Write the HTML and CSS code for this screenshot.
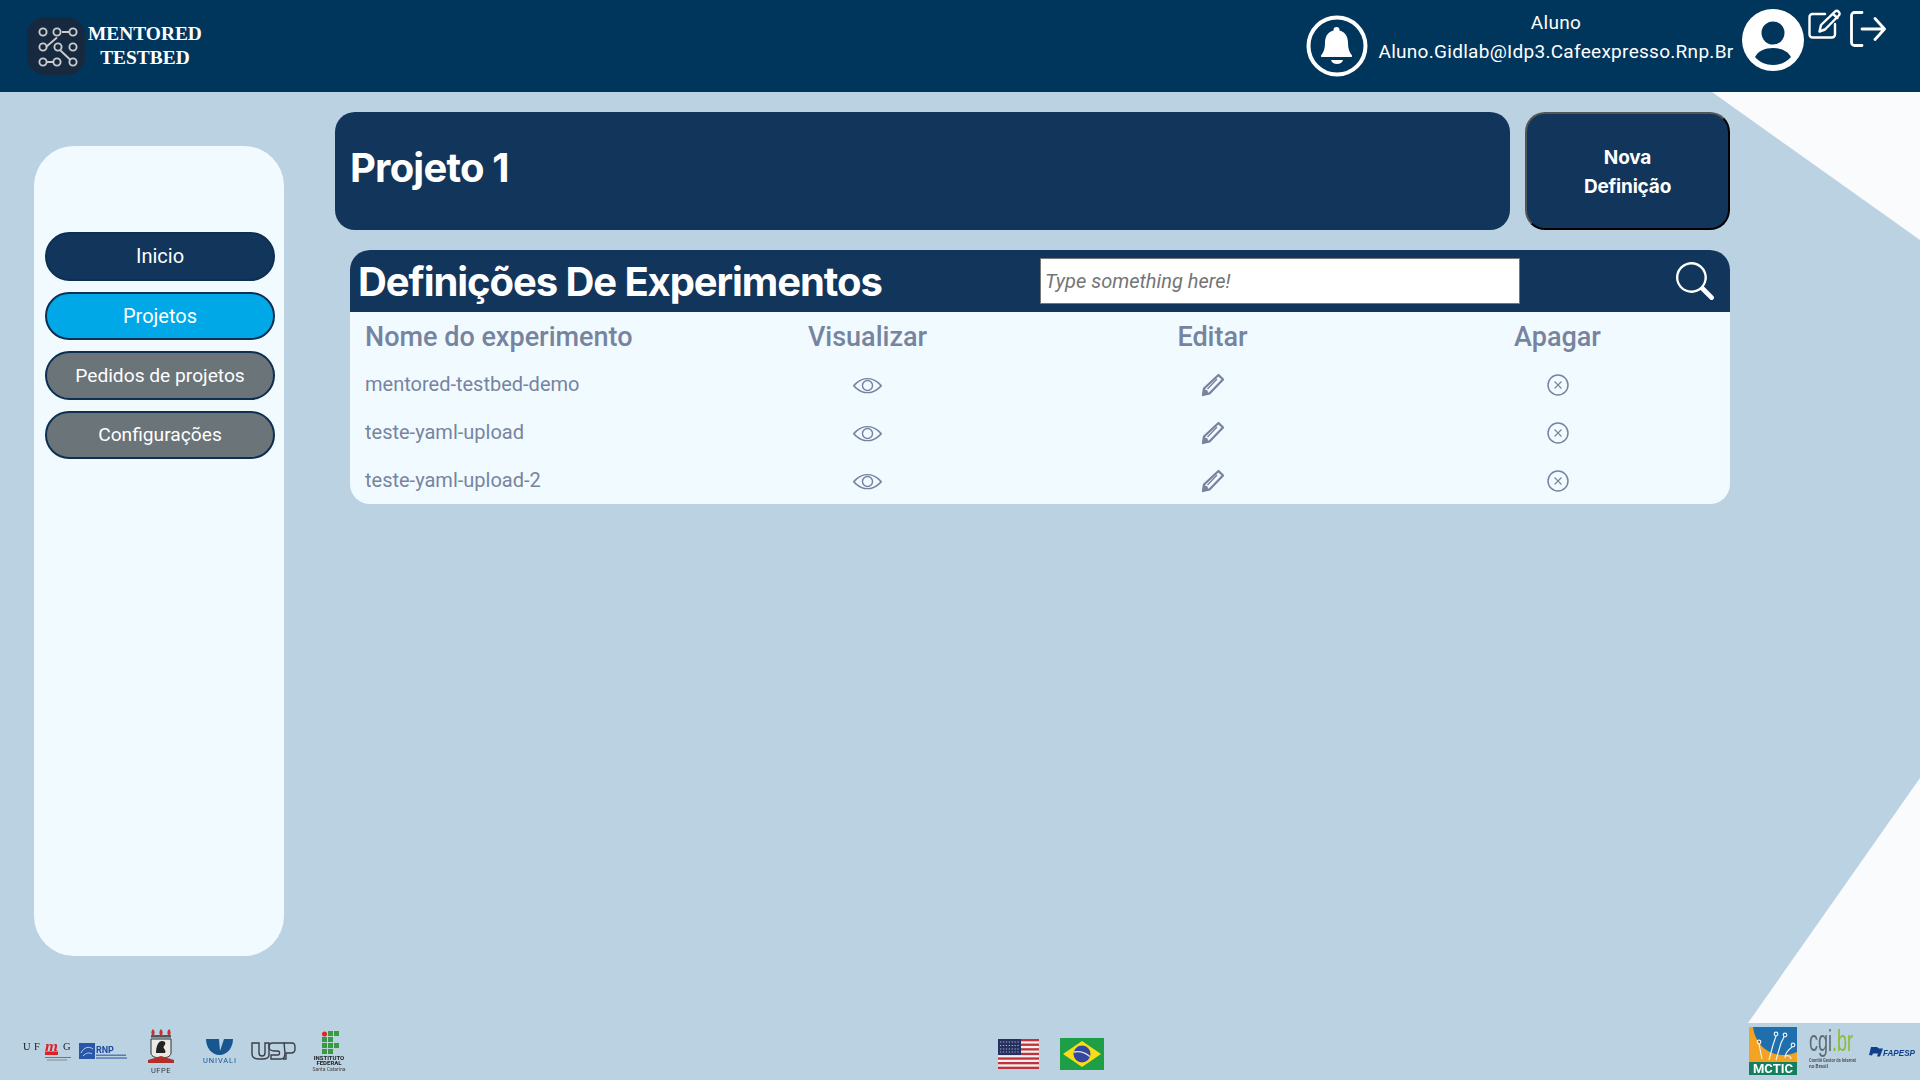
FILE: index.html
```html
<!DOCTYPE html>
<html lang="pt-BR">
<head>
<meta charset="utf-8">
<title>Mentored Testbed</title>
<link rel="stylesheet" href="styles.css">
</head>
<body>
<div class="tri tri-top"></div>
<div class="tri tri-bottom"></div>
<header class="topbar">
  <div class="brand">
    <svg class="brand-icon" viewBox="0 0 58 58">
      <rect width="58" height="58" rx="18" fill="#16293f"/>
      <g fill="none" stroke="#c9cbcc" stroke-width="1.9">
        <path d="M19 30 30 20.500M35 15h7M33.500 33.500 43.500 43M20 45h6"/>
        <circle cx="16" cy="15" r="3.600"/><circle cx="30" cy="15" r="3.600"/><circle cx="46" cy="15" r="3.600"/>
        <circle cx="16" cy="30" r="3.600"/><circle cx="31" cy="30" r="3.600"/><circle cx="46" cy="30" r="3.600"/>
        <circle cx="16" cy="45" r="3.600"/><circle cx="30" cy="45" r="3.600"/><circle cx="46" cy="45" r="3.600"/>
      </g>
    </svg>
    <div class="brand-name">MENTORED<br>TESTBED</div>
  </div>
  <div class="user">
    <svg class="bell" viewBox="0 0 62 62">
      <circle cx="31" cy="31" r="28.500" fill="none" stroke="#fff" stroke-width="4"/>
      <path fill="#fff" d="M30.500 12c2 0 3 1.200 3 3v.5C39.500 17 42 22 42 28c0 5 1 9 4 12.500q.6 1.500-1 1.500H16q-1.600 0-1-1.500C18 37 19 33 19 28c0-6 2.500-11 8.500-12.500V15c0-1.800 1-3 3-3z"/>
      <path fill="#fff" d="M25 45h12c-.6 2.600-3 4-6 4s-5.400-1.400-6-4z"/>
    </svg>
    <div class="user-text">
      <div>Aluno</div>
      <div>Aluno.Gidlab@Idp3.Cafeexpresso.Rnp.Br</div>
    </div>
    <svg class="avatar" viewBox="0 0 62 62">
      <circle cx="31" cy="31" r="31" fill="#fff"/>
      <circle cx="31" cy="24" r="11.500" fill="#00365c"/>
      <path fill="#00365c" d="M13 48c3-6 10-9 18-9s15 3 18 9c-4 5-11 8-18 8s-14-3-18-8z"/>
    </svg>
    <svg class="edit" viewBox="0 0 34 30" fill="none" stroke="#fff" stroke-width="2.400" stroke-linecap="round" stroke-linejoin="round">
      <path d="M17 5H4.500A3 3 0 0 0 1.500 8v17.500a3 3 0 0 0 3 3H24a3 3 0 0 0 3-3V15"/>
      <path d="M13 16 27 2.700c1.200-1.100 2.600-1 3.700.1s1.200 2.600.1 3.700L17 20.500l-5.500 2z"/>
      <path d="M25 5l4.500 4"/>
    </svg>
    <svg class="logout" viewBox="0 0 36 36" fill="none" stroke="#fff" stroke-width="2.800" stroke-linecap="round" stroke-linejoin="round">
      <path d="M12 1.500H4.500A3 3 0 0 0 1.500 4.500v27a3 3 0 0 0 3 3H12"/>
      <path d="M12 18h22M25 7.500 34.500 18 25 28.500"/>
    </svg>
  </div>
</header>

<main class="main">
  <nav class="sidebar">
    <a class="pill pill-dark">Inicio</a>
    <a class="pill pill-active">Projetos</a>
    <a class="pill pill-gray">Pedidos de projetos</a>
    <a class="pill pill-gray">Configurações</a>
  </nav>
  <section class="content">
    <div class="top-row">
      <div class="title-card"><h1>Projeto 1</h1></div>
      <button class="new-btn" type="button">Nova<br>Definição</button>
    </div>
    <div class="table">
      <div class="table-head">
        <h2>Definições De Experimentos</h2>
        <input class="search-input" type="text" placeholder="Type something here!">
        <svg class="search-icon" viewBox="0 0 16 16" fill="#fff"><path d="M11.742 10.344a6.500 6.500 0 1 0-1.397 1.398h-.001q.044.060.098.115l3.850 3.850a1 1 0 0 0 1.415-1.414l-3.850-3.850a1 1 0 0 0-.115-.100zM12 6.500a5.500 5.500 0 1 1-11 0 5.500 5.500 0 0 1 11 0"/></svg>
      </div>
      <div class="row row-head">
        <div class="cell-name">Nome do experimento</div><div>Visualizar</div><div>Editar</div><div>Apagar</div>
      </div>
      <div class="row">
        <div class="cell-name">mentored-testbed-demo</div>
        <div><svg class="ic-eye" viewBox="0 0 29 20"><use href="#eye"/></svg></div>
        <div><svg class="ic-pen" viewBox="0 0 24 24"><use href="#pen"/></svg></div>
        <div><svg class="ic-x" viewBox="0 0 22 22"><use href="#xc"/></svg></div>
      </div>
      <div class="row">
        <div class="cell-name">teste-yaml-upload</div>
        <div><svg class="ic-eye" viewBox="0 0 29 20"><use href="#eye"/></svg></div>
        <div><svg class="ic-pen" viewBox="0 0 24 24"><use href="#pen"/></svg></div>
        <div><svg class="ic-x" viewBox="0 0 22 22"><use href="#xc"/></svg></div>
      </div>
      <div class="row">
        <div class="cell-name">teste-yaml-upload-2</div>
        <div><svg class="ic-eye" viewBox="0 0 29 20"><use href="#eye"/></svg></div>
        <div><svg class="ic-pen" viewBox="0 0 24 24"><use href="#pen"/></svg></div>
        <div><svg class="ic-x" viewBox="0 0 22 22"><use href="#xc"/></svg></div>
      </div>
    </div>
  </section>
</main>

<footer class="footer">
  <div class="logos logos-left">
    <svg class="lg-ufmg" viewBox="0 0 48 20">
      <text x="0" y="9" class="t-serif" font-size="10.500" fill="#222">U</text>
      <text x="11" y="9" class="t-serif" font-size="10.500" fill="#222">F</text>
      <text x="22" y="9.500" class="t-serif-i" font-size="15" textLength="13" lengthAdjust="spacingAndGlyphs" fill="#d8232a">m</text>
      <text x="40" y="9" class="t-serif" font-size="10.500" fill="#222">G</text>
      <rect x="22" y="10.500" width="13" height="3.500" fill="#d8232a"/>
      <rect x="22" y="16" width="26" height="1" fill="#777"/>
      <rect x="24" y="18.500" width="20" height="1" fill="#888"/>
    </svg>
    <svg class="lg-rnp" viewBox="0 0 48 16">
      <rect width="16" height="16" fill="#2a56a8"/>
      <path d="M2 10c3-6 8-7 12-4M4 13c3-3 6-4 9-2" stroke="#bcd0ee" fill="none"/>
      <text x="17" y="10" class="t-sans" font-size="9" font-weight="700" fill="#1e4a9a">RNP</text>
      <rect x="17" y="11.500" width="30" height="1.500" fill="#5b78b4"/>
      <rect x="17" y="14.300" width="31" height="1.500" fill="#5b78b4"/>
    </svg>
    <svg class="lg-ufpe" viewBox="0 0 26 44">
      <path d="M5 0c2 2 2 4 1 6H4C3 4 3 2 5 0zM13 0c2 2 2 4 1 6h-2c-1-2-1-4 1-6zM21 0c2 2 2 4 1 6h-2c-1-2-1-4 1-6z" fill="#c6322e"/>
      <rect x="3" y="6" width="20" height="2.500" fill="#555"/>
      <path d="M3 10h20v14c0 4-6 5-10 5S3 28 3 24z" fill="#e9e9e6" stroke="#333"/>
      <path d="M8 24c0-6 2-12 6-12s4 3 2 5 3 4 1 7z" fill="#222"/>
      <path d="M0 31 13 27l13 4v3H0z" fill="#b22f2c"/>
      <text x="13" y="43.500" text-anchor="middle" class="t-sans" font-size="7.500" letter-spacing=".5" fill="#333">UFPE</text>
    </svg>
    <svg class="lg-univali" viewBox="0 0 33 24">
      <path d="M3 0h13l1 12 4-12h9c0 9-6 16-13.500 16S3 9 3 0z" fill="#17568f"/>
      <text x="0" y="23.500" class="t-sans" font-size="7.500" textLength="33" lengthAdjust="spacing" fill="#17568f">UNIVALI</text>
    </svg>
    <svg class="lg-usp" viewBox="0 0 45 18" fill="none" stroke="#3a3f45" stroke-width="1.400">
      <path d="M1 1h7v10c0 2 1 3 3 3s3-1 3-3V1h4v12c0 3-3 4-7 4H8c-5 0-7-2-7-5z"/>
      <path d="M33 1H22c-3 0-4 2-4 4s2 4 5 4h4c2 0 2 4 0 4h-7v4h10c3 0 4-3 4-6z"/>
      <path d="M33 1h8c2 0 3 2 3 4v2c0 2-1 4-4 4h-5v6h-3"/>
    </svg>
    <svg class="lg-if" viewBox="0 0 36 40">
      <circle cx="13.500" cy="3" r="2.500" fill="#e02420"/>
      <g fill="#3a9a3f">
        <rect x="17" y="0" width="5" height="5"/><rect x="23" y="0" width="5" height="5"/>
        <rect x="11" y="6" width="5" height="5"/><rect x="17" y="6" width="5" height="5"/>
        <rect x="11" y="12" width="5" height="5"/><rect x="17" y="12" width="5" height="5"/><rect x="23" y="12" width="5" height="5"/>
        <rect x="11" y="18" width="5" height="5"/><rect x="17" y="18" width="5" height="5"/>
      </g>
      <text x="18" y="29" text-anchor="middle" class="t-sans" font-size="6" font-weight="700" fill="#222">INSTITUTO</text>
      <text x="18" y="34" text-anchor="middle" class="t-sans" font-size="6" font-weight="700" fill="#222">FEDERAL</text>
      <text x="18" y="39.500" text-anchor="middle" class="t-sans" font-size="5" fill="#444">Santa Catarina</text>
    </svg>
  </div>
  <div class="logos logos-center">
    <svg class="flag-us" viewBox="0 0 41 30">
      <rect width="41" height="30" fill="#f1efef"/>
      <g fill="#c0313c">
        <rect y="0" width="41" height="2.300"/><rect y="4.600" width="41" height="2.300"/><rect y="9.200" width="41" height="2.300"/><rect y="13.800" width="41" height="2.300"/><rect y="18.400" width="41" height="2.300"/><rect y="23" width="41" height="2.300"/><rect y="27.700" width="41" height="2.300"/>
      </g>
      <rect width="23" height="16" fill="#26305f"/>
      <path d="M2 3h19M2 6.500h19M2 10h19M2 13h19" stroke="#aab2cc" stroke-width="1.100" stroke-dasharray="1.300 1.600"/>
    </svg>
    <svg class="flag-br" viewBox="0 0 44 32">
      <rect width="44" height="32" fill="#1f9e48"/>
      <path d="M22 3 41 16 22 29 3 16z" fill="#f9dd16"/>
      <circle cx="22" cy="16" r="8.500" fill="#3446a0"/>
      <path d="M13.800 14c5-1 11.500.5 16 4.500" fill="none" stroke="#d9e6da" stroke-width="1.300"/>
    </svg>
  </div>
  <div class="logos logos-right">
    <svg class="lg-mctic" viewBox="0 0 48 48">
      <rect width="48" height="48" fill="#f3a221"/>
      <path d="M4 0h44v25c-4 2-9 3-14 3C18 28 6 16 4 0z" fill="#1f6fae"/>
      <g stroke="#e8f1f7" stroke-width="1.200" fill="none">
        <path d="M13 32 10 17M20 33l4-15 3-9M27 33l5-17 3-6M36 31c0-5 3-8 7-11M42 32c0-2-2-4-5-3"/>
        <circle cx="10" cy="15" r="1.800"/><circle cx="27" cy="7" r="1.800"/><circle cx="36" cy="8" r="1.800"/><circle cx="44" cy="18" r="1.800"/>
      </g>
      <rect y="35" width="48" height="13" fill="#12805f"/>
      <text x="4" y="46" class="t-sans" font-size="12" font-weight="700" textLength="40" lengthAdjust="spacingAndGlyphs" fill="#fff">MCTIC</text>
    </svg>
    <svg class="lg-cgi" viewBox="0 0 49 44">
      <text x="1" y="22" class="t-sans-c" font-size="29" textLength="44" lengthAdjust="spacingAndGlyphs" fill="#5f6b73">cgi<tspan fill="#8dbb35">.br</tspan></text>
      <text x="1" y="33" class="t-sans" font-size="4.800" font-weight="700" textLength="47" lengthAdjust="spacingAndGlyphs" fill="#555">Comitê Gestor da Internet</text>
      <text x="1" y="39" class="t-sans" font-size="4.800" font-weight="700" fill="#555">no Brasil</text>
    </svg>
    <svg class="lg-fapesp" viewBox="0 0 47 11">
      <path d="M0 9 2 1h6l2 1.500h4l-3 8H8l1-3H4l-1 2z" fill="#10408c"/>
      <text x="14" y="9.500" class="t-sans-bi" font-size="9.500" textLength="32" lengthAdjust="spacingAndGlyphs" fill="#10408c">FAPESP</text>
    </svg>
  </div>
</footer>

<svg class="defs" width="0" height="0">
  <defs>
    <g id="eye" fill="#76849f">
      <path transform="translate(.5 -.6) scale(1.750 1.340)" d="M16 8s-3-5.500-8-5.500S0 8 0 8s3 5.500 8 5.500S16 8 16 8M1.173 8a13 13 0 0 1 1.660-2.043C4.120 4.668 5.880 3.500 8 3.500s3.879 1.168 5.168 2.457A13 13 0 0 1 14.828 8q-.086.130-.195.288c-.335.480-.830 1.120-1.465 1.755C11.879 11.332 10.119 12.500 8 12.500s-3.879-1.168-5.168-2.457A13 13 0 0 1 1.172 8z"/>
      <path fill-rule="evenodd" d="M14.500 4.500a5.500 5.500 0 1 0 0 11 5.500 5.500 0 0 0 0-11m0 1.400a4.100 4.100 0 1 1 0 8.200 4.100 4.100 0 0 1 0-8.200"/>
    </g>
    <g id="pen" fill="none" stroke="#76849f" stroke-linejoin="round">
      <path stroke-width="2.300" d="M17.500 2 22 6.500 8.500 20.500 2 22l1-6.500z"/>
      <path fill="#76849f" stroke-width="1" d="M3 16l-1 6 6.500-1.500-2-.5-.5-2.500-2.500-.5z"/>
      <path stroke-width="1.300" d="M16 6 6.500 16"/>
    </g>
    <g id="xc" fill="none" stroke="#76849f">
      <circle cx="11" cy="11" r="10" stroke-width="1.500"/>
      <path d="M7.500 7.500l7 7M14.500 7.500l-7 7" stroke-width="1.100"/>
    </g>
  </defs>
</svg>
</body>
</html>
```

FILE: styles.css
```css
* { box-sizing: border-box; }
html, body { margin: 0; height: 100%; }
body {
  width: 1920px;
  height: 1080px;
  overflow: hidden;
  position: relative;
  background: #bbd2e3;
  font-family: Roboto, "Liberation Sans", sans-serif;
  display: flex;
  flex-direction: column;
}
.defs { position: absolute; }

.tri { position: absolute; background: #f9fbfd; }
.tri-top {
  top: 92px; right: 0; width: 208px; height: 148px;
  clip-path: polygon(0 0, 100% 0, 100% 100%);
}
.tri-bottom {
  top: 778px; right: 0; width: 172px; height: 245px;
  clip-path: polygon(100% 0, 100% 100%, 0 100%);
}

/* top bar */
.topbar {
  position: relative;
  height: 92px;
  flex: none;
  background: #00365c;
  color: #fff;
  display: flex;
  justify-content: space-between;
  padding: 0 34px 0 27px;
}
.brand { display: flex; align-items: flex-start; padding-top: 17px; }
.brand-icon { width: 58px; height: 58px; }
.brand-name {
  font-family: "Liberation Serif", serif;
  font-weight: 700;
  font-size: 19.400px;
  line-height: 24px;
  text-align: center;
  margin: 5px 0 0 3px;
}
.user { display: flex; align-items: flex-start; }
.bell { width: 62px; height: 62px; margin-top: 15px; }
.user-text {
  width: 356px;
  margin: 8px 0 0 10px;
  text-align: center;
  font-size: 19px;
  line-height: 29px;
  letter-spacing: .29px;
  white-space: nowrap;
}
.avatar { width: 62px; height: 62px; margin: 9px 0 0 8px; }
.edit { width: 34px; height: 30px; margin: 9px 0 0 4px; }
.logout { width: 36px; height: 36px; margin: 11px 0 0 8px; }

/* main */
.main {
  position: relative;
  flex: 1;
  display: flex;
  align-items: flex-start;
  padding-left: 34px;
}
.sidebar {
  width: 250px;
  height: 810px;
  margin-top: 54px;
  padding: 86px 9px 0 11px;
  background: #f1faff;
  border-radius: 40px;
  display: flex;
  flex-direction: column;
  gap: 11px;
}
.pill {
  height: 48.500px;
  display: flex;
  align-items: center;
  justify-content: center;
  color: #fff;
  font-size: 20px;
  border: 2px solid #0c2f52;
  border-radius: 25px;
}
.pill-dark { background: #12355b; }
.pill-active { background: #00a8e8; }
.pill-gray { background: #6a7479; font-size: 19.200px; }

.content {
  width: 1395px;
  margin-left: 51px;
  padding-top: 20px;
}
.top-row { display: flex; gap: 15px; }
.title-card {
  flex: 1;
  height: 118px;
  background: #12355b;
  border-radius: 20px;
  padding: 0 15px;
  display: flex;
  align-items: center;
}
h1 {
  margin: 0 0 8px;
  color: #fff;
  font-family: Inter, sans-serif;
  font-size: 40px;
  font-weight: 700;
  letter-spacing: -.02em;
}
.new-btn {
  width: 205px;
  height: 118px;
  padding: 2px 0 0;
  background: #12355b;
  color: #fff;
  border: 2px solid;
  border-color: #555 #000 #000 #555;
  border-radius: 20px;
  font-family: Inter, sans-serif;
  font-size: 19px;
  font-weight: 700;
  line-height: 29px;
  letter-spacing: -.01em;
}
.table {
  width: 1380px;
  height: 254px;
  margin: 20px 0 0 15px;
  background: #f1faff;
  border-radius: 20px;
  overflow: hidden;
}
.table-head {
  height: 62px;
  background: #12355b;
  display: flex;
  align-items: center;
  padding-left: 8px;
  position: relative;
}
h2 {
  margin: 0;
  width: 682px;
  color: #fff;
  font-family: Inter, sans-serif;
  font-size: 40px;
  font-weight: 700;
  letter-spacing: -.027em;
  white-space: nowrap;
}
.search-input {
  width: 480px;
  height: 46px;
  padding: 0 4px;
  background: #fff;
  border: 1px solid #767676;
  font-family: Roboto, sans-serif;
  font-size: 20px;
}
.search-input::placeholder { color: #757575; font-style: italic; opacity: 1; }
.search-icon { width: 38px; height: 38px; margin-left: 156px; }

.row {
  height: 48px;
  display: grid;
  grid-template-columns: repeat(4, 1fr);
  align-items: center;
  text-align: center;
  color: #76849f;
  font-size: 20px;
}
.row > div { display: flex; align-items: center; justify-content: center; }
.row > .cell-name { justify-content: flex-start; padding-left: 15px; }
.row-head { font-size: 27px; font-weight: 500; padding-top: 2px; }
.ic-eye { width: 31px; height: 21px; margin-top: 2px; }
.ic-pen { width: 24px; height: 24px; margin-top: 2px; }
.ic-x { width: 22px; height: 22px; margin-top: 2px; }

/* footer */
.footer {
  height: 58px;
  flex: none;
  display: flex;
  align-items: center;
  justify-content: space-between;
  padding: 0 4px 0 23px;
  position: relative;
}
.logos { display: flex; align-items: center; }
.logos-left svg, .logos-right svg { filter: blur(.35px); overflow: visible; }
.logos-center { margin: 6px 0 0 6px; }
.t-serif { font-family: "Liberation Serif", serif; }
.t-serif-i { font-family: "Liberation Serif", serif; font-style: italic; font-weight: 700; }
.t-sans { font-family: Roboto, sans-serif; }
.t-sans-c { font-family: "Liberation Sans", sans-serif; }
.t-sans-bi { font-family: "Liberation Sans", sans-serif; font-weight: 700; font-style: italic; }
.lg-ufmg { width: 48px; height: 20px; }
.lg-rnp { width: 48px; height: 16px; margin-left: 8px; }
.lg-ufpe { width: 26px; height: 44px; margin-left: 21px; }
.lg-univali { width: 33px; height: 24px; margin-left: 29px; }
.lg-usp { width: 45px; height: 18px; margin-left: 15px; }
.lg-if { width: 36px; height: 40px; margin-left: 15px; }
.flag-us { width: 41px; height: 30px; }
.flag-br { width: 44px; height: 32px; margin-left: 21px; }
.lg-mctic { width: 48px; height: 48px; }
.lg-cgi { width: 49px; height: 44px; margin-left: 11px; }
.lg-fapesp { width: 47px; height: 11px; margin-left: 12px; }
```
